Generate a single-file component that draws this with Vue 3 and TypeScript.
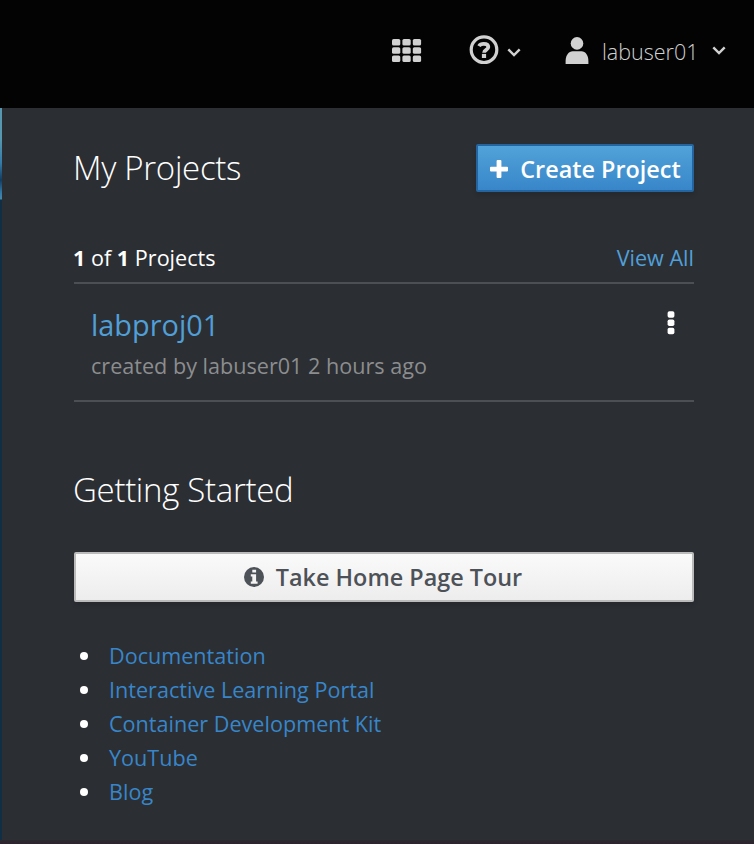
<script setup lang="ts">
interface Resource {
  label: string
}

const resources: Resource[] = [
  { label: 'Documentation' },
  { label: 'Interactive Learning Portal' },
  { label: 'Container Development Kit' },
  { label: 'YouTube' },
  { label: 'Blog' },
]

const cells: { x: number; y: number }[] = [0, 1, 2].flatMap((row) =>
  [0, 1, 2].map((col) => ({ x: col * 10.4, y: row * 8.2 })),
)
</script>

<template>
  <div class="page">
    <header class="masthead">
      <svg class="launcher" width="30" height="24" viewBox="0 0 30 24">
        <rect v-for="(c, i) in cells" :key="i" :x="c.x" :y="c.y" width="8.3" height="6.6" rx="1.6" />
      </svg>
      <svg class="help" width="30" height="30" viewBox="0 0 30 30">
        <circle cx="15" cy="14.7" r="12.800" />
        <path class="hook" d="M10 11.100C11 9.400 12.600 8.800 14.700 8.800c2.800 0 4.600 1.300 4.600 3.300 0 3-4.100 2.700-4.200 5.600" />
        <rect x="12.900" y="18.900" width="4.200" height="4.100" />
      </svg>
      <svg class="chevron help-caret" width="14" height="9" viewBox="0 0 14 9"><path d="M1.3 1.3 7 7l5.700-5.700" /></svg>
      <svg class="user" width="24" height="28" viewBox="0 0 24 28">
        <circle cx="12" cy="6.4" r="6.300" />
        <path d="M.6 27.100v-3C.6 18.300 3.800 14.300 7.700 14.300h8.800c3.900 0 6.900 4.100 6.900 9.800v3z" />
      </svg>
      <span class="username">labuser01</span>
      <svg class="chevron" width="14" height="9" viewBox="0 0 14 9"><path d="M1.300 1.300 7 7l5.700-5.700" /></svg>
    </header>
    <div class="body">
      <div class="edge"></div>
      <main class="panel">
        <section class="title-row">
          <h2>My Projects</h2>
          <button class="create">
            <svg width="18" height="18" viewBox="0 0 18 18"><path d="M7.600 0h2.800q1 0 1 1v5.800H17q1 0 1 1v2.600q0 1-1 1h-5.600V17q0 1-1 1H7.600q-1 0-1-1v-5.600H1q-1 0-1-1V7.800q0-1 1-1h5.600V1q0-1 1-1z" /></svg>
            <span>Create Project</span>
          </button>
        </section>
        <div class="summary">
          <span class="count"><b>1</b> of <b>1</b> Projects</span>
          <a class="view-all">View All</a>
        </div>
        <article class="project">
          <div>
            <a class="name">labproj01</a>
            <p class="meta">created by labuser01 2 hours ago</p>
          </div>
          <svg class="kebab" width="8" height="24" viewBox="0 0 8 24">
            <rect x=".6" y=".3" width="6.800" height="6.500" rx="1.800" />
            <rect x=".6" y="8.500" width="6.800" height="6.500" rx="1.800" />
            <rect x=".6" y="16.700" width="6.800" height="6.500" rx="1.800" />
          </svg>
        </article>
        <h2 class="started">Getting Started</h2>
        <button class="tour">
          <svg width="20" height="20" viewBox="0 0 20 20">
            <circle cx="10" cy="10" r="10" />
            <path d="M8.300 2.700h3.800v2.900H8.300zM6.800 7.300h5.300v7.200h1.500v2.300H6.800v-2.300h1.500V9.600H6.800z" />
          </svg>
          <span>Take Home Page Tour</span>
        </button>
        <ul class="links">
          <li v-for="r in resources" :key="r.label"><a>{{ r.label }}</a></li>
        </ul>
      </main>
    </div>
    <div class="base"></div>
  </div>
</template>

<style>
body {
  background: #2b2e33;
}
</style>

<style scoped>
.page {
  display: flex;
  flex-direction: column;
  width: 754px;
  height: 844px;
  overflow: hidden;
  font-family: 'Open Sans', sans-serif;
  font-size: 21.6px;
  line-height: 34px;
  color: #fff;
  background: #2b2e33;
}
svg {
  display: block;
  flex: none;
}
.masthead {
  display: flex;
  align-items: flex-start;
  box-sizing: border-box;
  height: 108px;
  padding: 0 0 0 392px;
  background: #030303;
  fill: #d1d1d1;
  color: #d1d1d1;
  flex: none;
}
.launcher {
  margin-top: 39px;
}
.help {
  margin: 35px 0 0 47px;
}
.help circle,
.help .hook {
  fill: none;
  stroke: #d1d1d1;
  stroke-width: 3.2;
}
.help .hook {
  stroke-width: 3.8;
}
.chevron {
  margin: 46px 0 0 13px;
  fill: none;
  stroke: #d1d1d1;
  stroke-width: 2.4;
}
.help-caret {
  margin: 48px 0 0 8px;
}
.user {
  margin: 37px 0 0 44px;
}
.username {
  margin: 35px 0 0 13px;
  width: 97px;
  font-size: 21.5px;
  font-weight: 300;
  white-space: nowrap;
}
.body {
  display: flex;
  flex: 1;
}
.edge {
  width: 2px;
  background: linear-gradient(#5798b0 0, #5798b0 30px, #347ba9 55px, #123c61 72px, #347ba9 85px, #4787aa 91px, #102e44 92px);
}
.panel {
  flex: 1;
  padding: 36px 60px 0 71px;
}
.title-row {
  display: flex;
  justify-content: space-between;
}
h2 {
  margin: 0;
  font-size: 33px;
  font-weight: 300;
  line-height: 48px;
  letter-spacing: -0.3px;
}
button {
  display: flex;
  align-items: center;
  justify-content: center;
  box-sizing: border-box;
  font-family: inherit;
  font-weight: 600;
  line-height: 34px;
  border-radius: 2px;
  box-shadow: 0 3px 4px rgba(3, 3, 3, 0.12);
}
.create {
  width: 218px;
  height: 48px;
  gap: 12px;
  padding: 2px 0 0 1px;
  font-size: 23.4px;
  color: #fff;
  fill: #fff;
  background: linear-gradient(#51a2d9, #3886c9);
  border: 2px solid #24659f;
}
.summary {
  display: flex;
  justify-content: space-between;
  height: 41px;
  margin: 49px 0 0 1px;
  border-bottom: 2px solid #4c5055;
}
.count {
  margin-left: -1px;
}
.view-all,
.name {
  color: #519fd7;
}
.project {
  display: flex;
  justify-content: space-between;
  box-sizing: border-box;
  height: 118px;
  margin-left: 1px;
  padding: 23px 19px 0 17px;
  border-bottom: 2px solid #4c5055;
}
.name {
  display: block;
  font-size: 28.9px;
  line-height: 36px;
}
.meta {
  margin: 6px 0 0;
  color: #8b8d8f;
}
.kebab {
  margin-top: 4px;
  fill: #fff;
}
.started {
  margin-top: 64px;
}
.tour {
  width: 620px;
  height: 50px;
  gap: 12px;
  margin: 38px 0 0 1px;
  padding: 0 2px 0 0;
  font-size: 23.4px;
  color: #4d5258;
  fill: #4d5258;
  background: linear-gradient(#fafafa, #ededed);
  border: 2px solid #bbb;
}
.tour path {
  fill: #f4f4f4;
}
.links {
  margin: 37px 0 0;
  padding-left: 7px;
  list-style: none;
}
.links li {
  display: flex;
  align-items: center;
  gap: 21px;
}
.links li::before {
  content: '';
  width: 8px;
  height: 8px;
  border-radius: 50%;
  background: #fff;
}
.links a {
  color: #3886c9;
}
.base {
  height: 4px;
  flex: none;
  background: linear-gradient(#2b292f, #2e222e);
}
</style>
